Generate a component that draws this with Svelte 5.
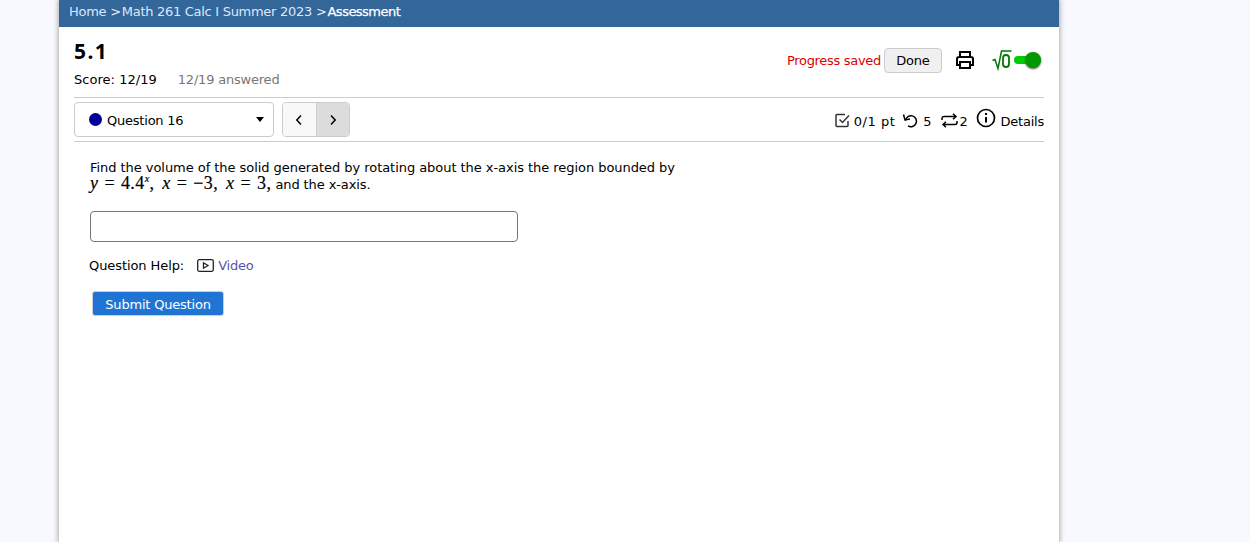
<script>
  const crumbs = ['Home', 'Math 261 Calc I Summer 2023'];
</script>

<div class="page">
  <main class="sheet">
    <nav class="crumbs">
      {#each crumbs as c}<a href="#top">{c}</a><span class="sep">&gt;</span>{/each}<span class="cur">Assessment</span>
    </nav>
    <div class="content">
      <header class="head">
        <div>
          <h1>5.1</h1>
          <div class="score"><span class="sc">Score: 12/19</span><span class="ans">12/19 answered</span></div>
        </div>
        <div class="tools">
          <span class="saved">Progress saved</span>
          <button class="done">Done</button>
          <svg class="print" width="20" height="20" viewBox="0 0 20 20" fill="none" stroke="#000" stroke-width="2"><path d="M5 7V2h10v5M5 15H2V9a2 2 0 0 1 2-2h12a2 2 0 0 1 2 2v6h-3"/><rect x="5" y="12" width="10" height="6"/></svg>
          <svg class="sqrt" width="20" height="22" viewBox="0 0 20 22" fill="none" stroke="#070" stroke-width="1.500"><path d="M.5 11.500l2.500-1 3 9L9.500 2H19.500"/><rect x="11" y="6" width="6" height="12" rx="3" stroke-width="1.800"/></svg>
          <span class="toggle"><span class="knob"></span></span>
        </div>
      </header>
      <div class="bar">
        <div class="select"><span class="dot"></span><span class="qname">Question 16</span><span class="caret"></span></div>
        <div class="pager">
          <button class="pg"><svg width="8" height="12" viewBox="0 0 8 12" fill="none" stroke="#000" stroke-width="1.500"><path d="M6 1.500 1.800 6 6 10.500"/></svg></button>
          <button class="pg on"><svg width="8" height="12" viewBox="0 0 8 12" fill="none" stroke="#000" stroke-width="1.500"><path d="M2 1.500 6.200 6 2 10.500"/></svg></button>
        </div>
        <div class="meta">
          <svg class="ic" width="15" height="15" viewBox="0 0 15 15" fill="none" stroke="#333" stroke-width="1.500"><path d="M13 8v4.500a1 1 0 0 1-1 1H2a1 1 0 0 1-1-1v-10a1 1 0 0 1 1-1h8"/><path d="M4.500 6.500l3 3L14 2.500"/></svg>
          <span class="m1">0/1 pt</span>
          <svg class="ic" width="16" height="15" viewBox="0 0 16 15" fill="none" stroke="#000" stroke-width="1.500"><path d="M3.500 7.500A5.500 5.500 0 1 1 6 12.800"/><path d="M1.500 1.500 3 7l5-1"/></svg>
          <span class="m2">5</span>
          <svg class="ic" width="17" height="15" viewBox="0 0 17 15" fill="none" stroke="#000" stroke-width="1.500"><path d="M1 7V5.500a2 2 0 0 1 2-2h12M12 .8l3 2.700-3 2.700M16 8v1.500a2 2 0 0 1-2 2H2M5 8.800l-3 2.700 3 2.700"/></svg>
          <span class="m3">2</span>
          <svg class="info" width="20" height="20" viewBox="0 0 20 20" fill="none" stroke="#000" stroke-width="1.700"><circle cx="10" cy="10" r="8.500"/><path d="M10 9v5.500" stroke-width="2"/><path d="M10 5v2" stroke-width="2"/></svg>
          <span class="details">Details</span>
        </div>
      </div>
      <section class="question">
        <p>Find the volume of the solid generated by rotating about the x-axis the region bounded by<br>
          <span class="math"><i>y</i><span class="eq">=</span>4.4<sup><i>x</i></sup>, <i class="v">x</i><span class="eq">=</span>−3, <i class="v">x</i><span class="eq">=</span>3,</span> <span class="tail">and the x-axis.</span></p>
        <input class="answer" type="text" aria-label="Answer" />
        <div class="help">
          <span class="hl">Question Help:</span>
          <svg width="17" height="13" viewBox="0 0 17 13" fill="none" stroke="#222" stroke-width="1.300"><rect x=".7" y=".7" width="15.600" height="11.600" rx="1.500"/><path d="M6.500 3.800v5.400l4.500-2.700z"/></svg>
          <a href="#top">Video</a>
        </div>
        <button class="submit">Submit Question</button>
      </section>
    </div>
  </main>
</div>

<style>
  :global(body) { margin: 0; background: #f8f9ff; font-family: Tahoma, "DejaVu Sans", sans-serif; font-size: 13px; color: #000; }
  .page { height: 542px; overflow: hidden; padding-left: 59px; }
  .sheet { width: 1000px; height: 542px; background: #fff; box-shadow: 0 0 5px 1px #aaa; }
  .crumbs { height: 27px; box-sizing: border-box; background: #336699; color: #fff; padding: 3px 0 0 10px; line-height: 17px; letter-spacing: -.29px; }
  .crumbs a { color: #dde6ff; text-decoration: none; }
  .sep { margin: 0 1px 0 4px; color: #eef; }
  .cur { color: #fff; letter-spacing: -.52px; -webkit-text-stroke: .25px #fff; }
  .content { padding: 0 15px; }
  .head { display: flex; justify-content: space-between; height: 71px; box-sizing: border-box; border-bottom: 1px solid #ccc; }
  h1 { margin: 12px 0 0; font-family: "Noto Sans", sans-serif; font-size: 21px; line-height: 25px; font-weight: 700; letter-spacing: 1.4px; }
  .score { display: flex; gap: 21px; margin-top: 7px; line-height: 17px; }
  .sc { letter-spacing: .03px; }
  .ans { color: #777; letter-spacing: -.2px; }
  .tools { display: flex; align-items: center; height: 66px; margin-top: 0; }
  .saved { color: #d00; letter-spacing: -.3px; margin-right: 3px; }
  .done { width: 58px; height: 25px; border: 1px solid #ccc; border-radius: 4px; background: #f0f0f0; font: inherit; letter-spacing: -.22px; padding: 0; margin-right: 13px; }
  .print { margin-right: 17px; }
  .sqrt { margin-right: 2px; }
  .toggle { position: relative; width: 27px; height: 8px; background: #00cc00; border-radius: 4px; margin-right: 3px; }
  .knob { position: absolute; right: 0; top: -4px; width: 16px; height: 16px; border-radius: 50%; background: #009900; box-shadow: 0 1px 2px #555; }
  .bar { display: flex; align-items: center; height: 44px; box-sizing: border-box; border-bottom: 1px solid #ccc; }
  .select { display: flex; align-items: center; width: 200px; height: 35px; box-sizing: border-box; border: 1px solid #ccc; border-radius: 4px; padding: 0 9px 0 14px; letter-spacing: -.22px; }
  .dot { width: 13px; height: 13px; border-radius: 50%; background: #000099; margin-right: 5px; }
  .qname { flex: 1; padding-top: 2px; }
  .caret { border: 4.500px solid transparent; border-top: 5px solid #000; border-bottom: 0; }
  .pager { display: flex; margin-left: 8px; height: 35px; border: 1px solid #ccc; border-radius: 4px; overflow: hidden; box-sizing: border-box; width: 68px; }
  .pg { flex: 1; border: 0; background: #f8f8f8; padding: 0; display: flex; align-items: center; justify-content: center; }
  .pg.on { background: #dcdcdc; border-left: 1px solid #ccc; }
  .meta { margin-left: auto; display: flex; align-items: center; height: 43px; letter-spacing: -.22px; }
  .ic { margin-top: 1px; }
  .m1, .m2, .m3, .details { margin-top: 3px; }
  .m1 { margin-left: 4px; margin-right: 7px; letter-spacing: .55px; }
  .m2 { margin-left: 5px; margin-right: 10px; }
  .m3 { margin-left: 1px; margin-right: 9px; }
  .info { margin-top: -3px; }
  .details { margin-left: 4px; }
  .question { padding: 17px 15px 0 16px; }
  p { margin: 0; line-height: 17px; letter-spacing: -.05px; }
  .math { font-family: "Liberation Serif", serif; font-size: 18px; line-height: 0; letter-spacing: .4px; -webkit-text-stroke: .2px #000; }
  .eq { margin: 0 6px; }
  .v { margin-left: 3px; }
  sup { font-size: 10px; line-height: 0; }
  .tail { letter-spacing: -.1px; }
  .answer { display: block; box-sizing: border-box; width: 428px; height: 31px; margin-top: 18px; border: 1px solid #777; border-radius: 4px; }
  .help { display: flex; align-items: center; margin: 15px 0 0 -1px; height: 17px; letter-spacing: -.22px; }
  .hl { letter-spacing: -.08px; }
  .help svg { margin: 0 4px 0 13px; }
  .help a { color: #5555aa; text-decoration: none; }
  .submit { display: block; margin: 17px 0 0 2px; width: 132px; height: 25px; background: #1f74d4; color: #fff; border: 1px solid #ccd; border-radius: 3px; font: inherit; letter-spacing: -.2px; padding: 2px 0 0; }
</style>
